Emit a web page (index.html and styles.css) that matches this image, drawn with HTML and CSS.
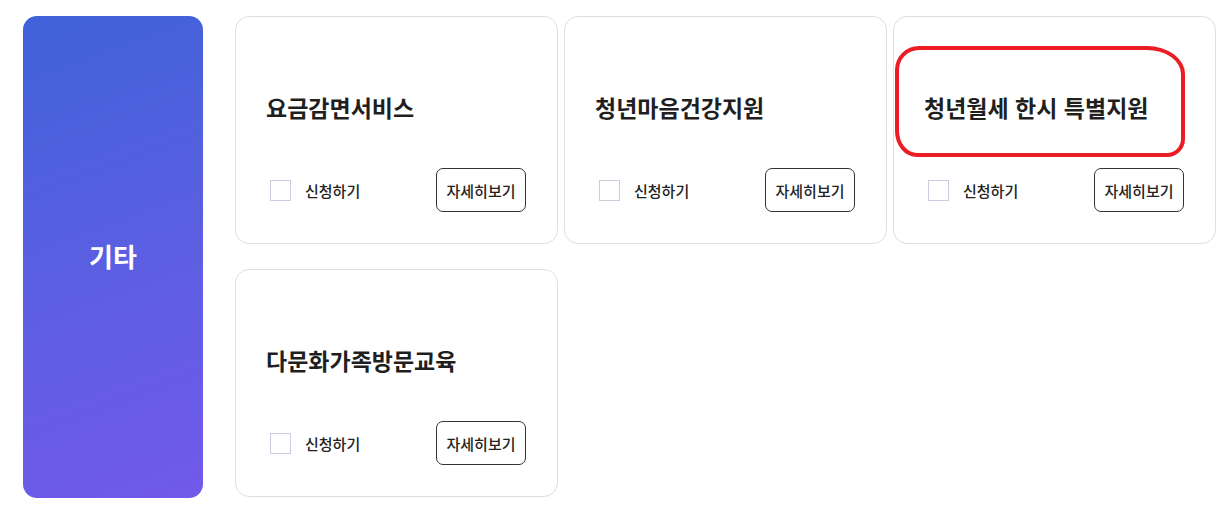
FILE: index.html
```html
<!DOCTYPE html>
<html lang="ko">
<head>
<meta charset="utf-8">
<link rel="stylesheet" href="styles.css">
</head>
<body>
<div class="wrap">
  <div class="side"><span>기타</span></div>
  <div class="cards">
    <div class="card">
      <h3 class="title">요금감면서비스</h3>
      <div class="row">
        <label class="check"><input type="checkbox"><span>신청하기</span></label>
        <button class="more">자세히보기</button>
      </div>
    </div>
    <div class="card">
      <h3 class="title">청년마음건강지원</h3>
      <div class="row">
        <label class="check"><input type="checkbox"><span>신청하기</span></label>
        <button class="more">자세히보기</button>
      </div>
    </div>
    <div class="card">
      <h3 class="title">청년월세 한시 특별지원</h3>
      <div class="mark"></div>
      <div class="row">
        <label class="check"><input type="checkbox"><span>신청하기</span></label>
        <button class="more">자세히보기</button>
      </div>
    </div>
    <div class="card">
      <h3 class="title">다문화가족방문교육</h3>
      <div class="row">
        <label class="check"><input type="checkbox"><span>신청하기</span></label>
        <button class="more">자세히보기</button>
      </div>
    </div>
  </div>
</div>
</body>
</html>
```
FILE: styles.css
```css
* { box-sizing: border-box; }
html, body { margin: 0; padding: 0; background: #fff; }
body {
  font-family: "Noto Sans CJK KR", "Noto Sans", sans-serif;
  color: #222;
}
.wrap {
  display: flex;
  gap: 32px;
  padding: 16px 0 0 23px;
}
.side {
  width: 180px;
  height: 482px;
  border-radius: 14px;
  background: linear-gradient(160deg, #3f62d8 0%, #5b5fe2 50%, #7259eb 100%);
  display: flex;
  align-items: center;
  justify-content: center;
  color: #fff;
  font-size: 26px;
  font-weight: 700;
}
.side span { margin-bottom: 4px; }
.cards {
  display: grid;
  grid-template-columns: repeat(3, 323px);
  column-gap: 6px;
  row-gap: 25px;
  align-content: start;
}
.card {
  position: relative;
  height: 228px;
  border: 1px solid #dedede;
  border-radius: 14px;
  padding: 75px 31px 0 30px;
}
.title {
  margin: 0;
  font-size: 23px;
  line-height: 30px;
  font-weight: 700;
  color: #1f1f1f;
}
.row {
  margin-top: 46px;
  display: flex;
  align-items: center;
  justify-content: space-between;
}
.check {
  display: flex;
  align-items: center;
  gap: 14px;
  font-size: 15px;
  font-weight: 500;
  color: #222;
  padding-left: 4px;
}
.check input {
  appearance: none;
  -webkit-appearance: none;
  margin: 0;
  width: 21px;
  height: 21px;
  border: 1px solid #c8cee0;
  background: #fff;
}
.more {
  width: 90px;
  height: 44px;
  border: 1px solid #333;
  border-radius: 7px;
  background: #fff;
  font-family: inherit;
  font-size: 15px;
  font-weight: 500;
  color: #222;
  padding: 0;
}
.mark {
  position: absolute;
  left: 1px;
  top: 29px;
  width: 290px;
  height: 111px;
  border: 4px solid #ec1c24;
  border-radius: 24px 38px 18px 22px / 24px 28px 18px 26px;
}
```
